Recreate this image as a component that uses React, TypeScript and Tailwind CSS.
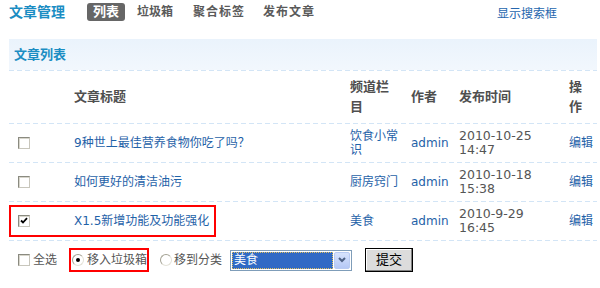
import React from "react";

type Row = {
  title: string;
  channel: string;
  date: string;
  time: string;
  checked?: boolean;
  marked?: boolean;
};

const rows: Row[] = [
  { title: "9种世上最佳营养食物你吃了吗？", channel: "饮食小常识", date: "2010-10-25", time: "14:47" },
  { title: "如何更好的清洁油污", channel: "厨房窍门", date: "2010-10-18", time: "15:38" },
  { title: "X1.5新增功能及功能强化", channel: "美食", date: "2010-9-29", time: "16:45", checked: true, marked: true },
];

function Divider() {
  return (
    <div className="h-px w-[588px] bg-[linear-gradient(to_right,#d3e5f6_5px,transparent_5px)] bg-[length:8px_1px] bg-repeat-x" />
  );
}

function Checkbox({ checked = false }: { checked?: boolean }) {
  return (
    <span className="flex h-[12px] w-[12px] items-center justify-center border border-[#8a8a80] border-r-[#c8c6bc] border-b-[#c8c6bc] bg-white shadow-[inset_1px_1px_0_#d8d6cc]">
      {checked && (
        <svg width="8" height="8" viewBox="0 0 8 8">
          <path d="M1 3.5 L3 5.5 L7 1.2" fill="none" stroke="#000" strokeWidth="1.8" />
        </svg>
      )}
    </span>
  );
}

function Radio({ checked = false }: { checked?: boolean }) {
  return (
    <span className="flex h-[12px] w-[12px] items-center justify-center rounded-full border border-[#a4a294] border-r-[#e4e2d8] border-b-[#e4e2d8] bg-white">
      {checked && <span className="h-[4px] w-[4px] rounded-full bg-black" />}
    </span>
  );
}

export default function App() {
  return (
    <div className="h-[288px] w-[600px] bg-white font-['DejaVu_Sans','Noto_Sans_CJK_SC',sans-serif] text-[12px] text-[#555]">
      {/* top nav */}
      <div className="flex h-[39px] items-start pt-[3px]">
        <div className="flex h-[18px] items-center">
          <span className="ml-[9px] text-[14px] font-bold text-[#1b8dc3]">文章管理</span>
          <span className="ml-[22px] flex h-[18px] items-center rounded-[3px] bg-[#666] px-[6px] text-[13px] font-bold text-white">
            列表
          </span>
          <span className="ml-[12px] font-bold text-[#5a5a5a]">垃圾箱</span>
          <span className="ml-[20px] tracking-[1px] font-bold text-[#5a5a5a]">聚合标签</span>
          <span className="ml-[18px] tracking-[1px] font-bold text-[#5a5a5a]">发布文章</span>
        </div>
        <span className="ml-auto mr-[43px] mt-[2px] text-[#2566ae]">显示搜索框</span>
      </div>

      <div className="ml-[9px] w-[588px]">
        <div className="flex h-[31px] items-center bg-[linear-gradient(to_bottom,#eaf3fc,#f2f7fd)] pl-[5px] text-[13px] font-bold text-[#1b8dc3]">
          文章列表
        </div>
        <Divider />

        {/* header */}
        <div className="flex h-[52px] items-center text-[13px] font-bold leading-[20px] text-[#4f4f4f]">
          <div className="w-[61px]" />
          <div className="w-[276px] pl-[4px]">文章标题</div>
          <div className="w-[61px] pl-[4px] pr-[7px]">频道栏目</div>
          <div className="w-[48px] pl-[4px]">作者</div>
          <div className="w-[110px] pl-[4px]">发布时间</div>
          <div className="w-[29px] pl-[4px]">操作</div>
        </div>

        {rows.map((r) => (
          <div key={r.title}>
            <Divider />
            <div className="relative flex h-[38px] items-center leading-[14px]">
              <div className="w-[61px] pl-[9px]">
                <Checkbox checked={r.checked} />
              </div>
              <div className="w-[276px] pl-[4px] text-[#1f62a8]">{r.title}</div>
              <div className="w-[61px] pl-[4px] pr-[7px] text-[#1f62a8]">{r.channel}</div>
              <div className="w-[48px] pl-[4px] text-[#1f62a8]">admin</div>
              <div className="w-[110px] pl-[4px] text-[12.5px] text-[#555]">
                <div>{r.date}</div>
                <div>{r.time}</div>
              </div>
              <div className="w-[29px] pl-[4px] text-[#1f62a8]">编辑</div>
              {r.marked && (
                <div className="absolute left-0 top-[3px] h-[32px] w-[207px] border-2 border-[#f00]" />
              )}
            </div>
          </div>
        ))}
        <Divider />

        {/* bottom actions */}
        <div className="mt-[7px] flex h-[24px] items-center pl-[9px]">
          <Checkbox />
          <span className="ml-[3px]">全选</span>
          <div className="ml-[12px] flex h-[24px] items-center border-2 border-[#f00] pl-[1px]">
            <Radio checked />
            <span className="ml-[3px]">移入垃圾箱</span>
          </div>
          <span className="ml-[11px]">
            <Radio />
          </span>
          <span className="ml-[2px]">移到分类</span>
          <div className="ml-[8px] flex h-[21px] w-[122px] items-center border border-[#7f9db9] bg-white p-[1px]">
            <div className="flex h-full flex-1 items-center bg-[#316ac5] pl-[2px] text-white outline-1 outline-dotted outline-[#e0c060] -outline-offset-1">
              美食
            </div>
            <div className="ml-[1px] flex h-full w-[16px] items-center justify-center rounded-[2px] border border-[#b9cbf3] bg-[linear-gradient(to_bottom,#d7e3fd,#b5c8f6)]">
              <svg width="8" height="6" viewBox="0 0 8 6">
                <path d="M1 1 L4 4 L7 1" fill="none" stroke="#4d6185" strokeWidth="2" />
              </svg>
            </div>
          </div>
          <button
            type="button"
            className="ml-[13px] flex h-[24px] w-[48px] items-center justify-center border border-black bg-[#dcdcdc] text-[13px] text-black shadow-[inset_-1px_-1px_0_#808080,inset_1px_1px_0_#fff]"
          >
            提交
          </button>
        </div>
      </div>
    </div>
  );
}
